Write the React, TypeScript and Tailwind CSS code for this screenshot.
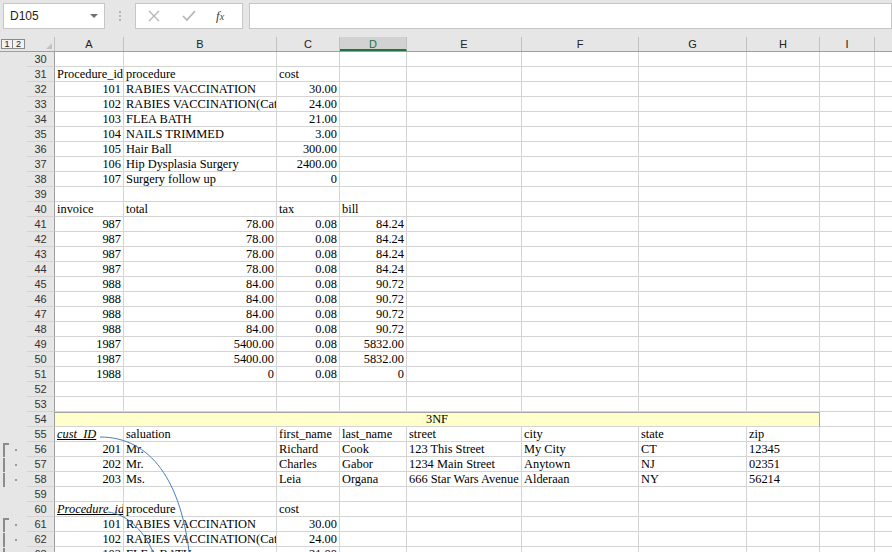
import React from "react";

type Cell = { v: string; right?: boolean; em?: boolean };

const COLS = ["A", "B", "C", "D", "E", "F", "G", "H", "I", ""];
const WIDTHS = [69, 153, 63, 67, 115, 117, 108, 73, 55, 60];

const t = (v: string): Cell => ({ v });
const n = (v: string): Cell => ({ v, right: true });
const e = (v: string): Cell => ({ v, em: true });

// sheet content, keyed by row number
const ROWS: Record<number, Cell[]> = {
  31: [t("Procedure_id"), t("procedure"), t("cost")],
  32: [n("101"), t("RABIES VACCINATION"), n("30.00")],
  33: [n("102"), t("RABIES VACCINATION(Cat"), n("24.00")],
  34: [n("103"), t("FLEA BATH"), n("21.00")],
  35: [n("104"), t("NAILS TRIMMED"), n("3.00")],
  36: [n("105"), t("Hair Ball"), n("300.00")],
  37: [n("106"), t("Hip Dysplasia Surgery"), n("2400.00")],
  38: [n("107"), t("Surgery follow up"), n("0")],
  40: [t("invoice"), t("total"), t("tax"), t("bill")],
  41: [n("987"), n("78.00"), n("0.08"), n("84.24")],
  42: [n("987"), n("78.00"), n("0.08"), n("84.24")],
  43: [n("987"), n("78.00"), n("0.08"), n("84.24")],
  44: [n("987"), n("78.00"), n("0.08"), n("84.24")],
  45: [n("988"), n("84.00"), n("0.08"), n("90.72")],
  46: [n("988"), n("84.00"), n("0.08"), n("90.72")],
  47: [n("988"), n("84.00"), n("0.08"), n("90.72")],
  48: [n("988"), n("84.00"), n("0.08"), n("90.72")],
  49: [n("1987"), n("5400.00"), n("0.08"), n("5832.00")],
  50: [n("1987"), n("5400.00"), n("0.08"), n("5832.00")],
  51: [n("1988"), n("0"), n("0.08"), n("0")],
  55: [e("cust_ID"), t("saluation"), t("first_name"), t("last_name"), t("street"), t("city"), t("state"), t("zip")],
  56: [n("201"), t("Mr."), t("Richard"), t("Cook"), t("123 This Street"), t("My City"), t("CT"), t("12345")],
  57: [n("202"), t("Mr."), t("Charles"), t("Gabor"), t("1234 Main Street"), t("Anytown"), t("NJ"), t("02351")],
  58: [n("203"), t("Ms."), t("Leia"), t("Organa"), t("666 Star Wars Avenue"), t("Alderaan"), t("NY"), t("56214")],
  60: [e("Procedure_id"), t("procedure"), t("cost")],
  61: [n("101"), t("RABIES VACCINATION"), n("30.00")],
  62: [n("102"), t("RABIES VACCINATION(Cat"), n("24.00")],
  63: [n("103"), t("FLEA BATH"), n("21.00")],
};

// rows that sit inside a collapsible outline group
const GROUP_START = [56, 61];
const GROUPED = [56, 57, 58, 61, 62, 63];

const SERIF = { fontFamily: '"Liberation Serif", "Times New Roman", serif' };

function FormulaBar() {
  return (
    <div className="flex h-[37px] items-start bg-[#e6e6e6] pt-[3px]">
      <div className="ml-[3px] flex h-[26px] w-[102px] shrink-0 items-center justify-between border border-[#c6c6c6] bg-white pl-[6px] pr-[6px]">
        <span className="text-[12px] text-[#222]">D105</span>
        <span className="h-0 w-0 border-x-[4px] border-t-[4px] border-x-transparent border-t-[#707070]" />
      </div>
      <div className="flex h-[26px] w-[30px] shrink-0 flex-col items-center justify-center gap-[2px]">
        <span className="h-[2px] w-[2px] bg-[#b5b5b5]" />
        <span className="h-[2px] w-[2px] bg-[#b5b5b5]" />
        <span className="h-[2px] w-[2px] bg-[#b5b5b5]" />
      </div>
      <div className="flex h-[26px] w-[108px] shrink-0 items-center border border-[#c6c6c6] bg-white">
        <svg width="12" height="12" viewBox="0 0 12 12" className="ml-[12px]">
          <path d="M1 1 L11 11 M11 1 L1 11" stroke="#b3b3b3" strokeWidth="1.3" fill="none" />
        </svg>
        <svg width="14" height="12" viewBox="0 0 14 12" className="ml-[22px]">
          <path d="M1 6 L5 10 L13 1" stroke="#b3b3b3" strokeWidth="1.6" fill="none" />
        </svg>
        <span className="ml-[20px] text-[13px] italic text-[#444]" style={SERIF}>
          f<span className="text-[10px]">x</span>
        </span>
      </div>
      <div className="ml-[6px] h-[26px] flex-1 border border-[#c6c6c6] bg-white" />
    </div>
  );
}

function ColumnHeader() {
  return (
    <div className="flex h-[15px] border-b border-[#9e9e9e] bg-[#e6e6e6] text-[11px] leading-[14px] text-[#222]">
      <div className="flex w-[27px] shrink-0 items-center pl-[1px]">
        <span className="flex h-[10px] w-[12px] items-center justify-center border border-[#8a8a8a] bg-[#f2f2f2] text-[9px] leading-none">1</span>
        <span className="flex h-[10px] w-[12px] items-center justify-center border border-l-0 border-[#8a8a8a] bg-[#f2f2f2] text-[9px] leading-none">2</span>
      </div>
      <div className="relative w-[28px] shrink-0 border-r border-[#c0c0c0]">
        <span className="absolute bottom-[2px] right-[2px] h-0 w-0 border-b-[6px] border-l-[6px] border-b-[#c3c3c3] border-l-transparent" />
      </div>
      {COLS.map((c, i) => (
        <div
          key={i}
          style={{ width: WIDTHS[i] }}
          className={`shrink-0 border-r border-[#c0c0c0] text-center ${
            c === "D" ? "border-b-2 border-b-[#217346] bg-[#d2d2d2] text-[#217346]" : ""
          }`}
        >
          {c}
        </div>
      ))}
    </div>
  );
}

function Row({ r }: { r: number }) {
  const cells = ROWS[r] ?? [];
  const grouped = GROUPED.includes(r);
  return (
    <div className="flex h-[15px] shrink-0">
      <div className="relative w-[27px] shrink-0 bg-[#e6e6e6]">
        {GROUP_START.includes(r) && (
          <span className="absolute left-[3px] top-[1px] h-[2px] w-[6px] bg-[#8c8c8c]" />
        )}
        {grouped && (
          <>
            <span className="absolute left-[3px] top-[1px] h-[15px] w-[2px] bg-[#8c8c8c]" />
            <span className="absolute left-[15px] top-[7px] h-[2px] w-[2px] bg-[#9a9a9a]" />
          </>
        )}
      </div>
      <div className="w-[28px] shrink-0 border-b border-r border-b-[#d4d4d4] border-r-[#9e9e9e] bg-[#e6e6e6] text-center text-[11px] leading-[15px] text-[#333]">
        {r}
      </div>
      {r === 54 ? (
        <>
          <div
            style={{ width: 765, ...SERIF }}
            className="shrink-0 border-b border-r border-t border-b-[#d4d4d4] border-r-[#a6a6a6] border-t-[#a6a6a6] bg-[#ffffcc] text-center text-[12.4px] leading-[13px] text-black"
          >
            3NF
          </div>
          <div style={{ width: WIDTHS[8] }} className="shrink-0 border-b border-r border-[#d4d4d4] bg-white" />
          <div style={{ width: WIDTHS[9] }} className="shrink-0 border-b border-r border-[#d4d4d4] bg-white" />
        </>
      ) : (
        COLS.map((_, i) => {
          const cell = cells[i];
          return (
            <div
              key={i}
              style={{ width: WIDTHS[i], ...SERIF }}
              className={`shrink-0 overflow-hidden whitespace-nowrap border-b border-r border-[#d4d4d4] bg-white px-[2px] text-[12.4px] leading-[15px] text-black ${
                cell?.right ? "text-right" : "text-left"
              }`}
            >
              {cell &&
                (cell.em ? <span className="italic underline">{cell.v}</span> : cell.v)}
            </div>
          );
        })
      )}
    </div>
  );
}

export default function App() {
  const rows = Array.from({ length: 34 }, (_, i) => 30 + i);
  return (
    <div
      className="relative h-[552px] w-[892px] overflow-hidden bg-[#e6e6e6]"
      style={{ fontFamily: '"Liberation Sans", Arial, sans-serif' }}
    >
      <FormulaBar />
      <ColumnHeader />
      <div className="flex flex-col">
        {rows.map((r) => (
          <Row key={r} r={r} />
        ))}
      </div>
      {/* trace arrows drawn over the grid */}
      <svg className="pointer-events-none absolute left-0 top-0" width="892" height="552">
        <path d="M100 437 C 150 437 182 480 190 560" stroke="#4a7ebb" strokeWidth="1" fill="none" />
        <path d="M108 512 C 126 514 146 530 156 560" stroke="#4a7ebb" strokeWidth="1" fill="none" />
      </svg>
    </div>
  );
}
